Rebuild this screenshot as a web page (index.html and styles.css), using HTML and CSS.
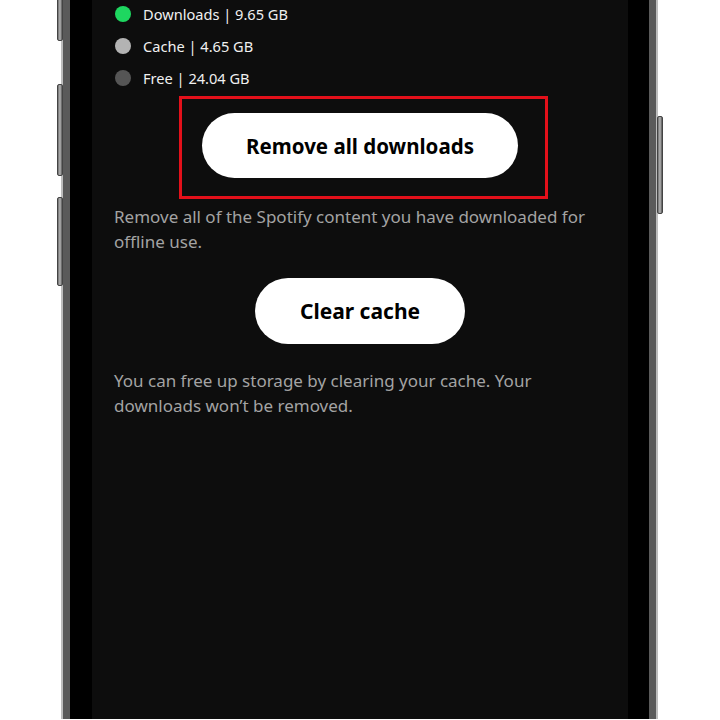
FILE: index.html
```html
<!DOCTYPE html>
<html>
<head>
	<meta charset="utf-8" />
	<title>Storage</title>
	<link rel="stylesheet" href="styles.css">
</head>
<body>
	<div class="phone">
		<span class="key key-a"></span>
		<span class="key key-b"></span>
		<span class="key key-c"></span>
		<span class="key key-power"></span>
		<div class="bezel">
			<div class="screen">
				<ul class="legend">
					<li><i class="dot dot-green"></i>Downloads | 9.65 GB</li>
					<li><i class="dot dot-light"></i>Cache | 4.65 GB</li>
					<li><i class="dot dot-dark"></i>Free | 24.04 GB</li>
				</ul>

				<div class="mark">
					<button class="pill pill-wide">Remove all downloads</button>
				</div>
				<p class="note">Remove all of the Spotify content you have downloaded for offline use.</p>

				<div class="center">
					<button class="pill pill-small">Clear cache</button>
				</div>
				<p class="note">You can free up storage by clearing your cache. Your downloads won’t be removed.</p>
			</div>
		</div>
	</div>
</body>
</html>
```

FILE: styles.css
```css
* { margin:0; padding:0; box-sizing:border-box; }
html, body { height:720px; overflow:hidden; background:#fff; }
body { font-family:"Noto Sans", "Lato", sans-serif; }

.phone { position:relative; width:597px; height:720px; margin-left:61px; border-left:2px solid #bdbdbd; border-right:2px solid #bdbdbd; background:#5a5a5a; padding:0 7px 0 7px; }
.bezel { height:100%; background:#000; padding:0 21px 0 22px; }
.screen { height:100%; background:#0d0d0d; padding:0 22px; color:#fff; }

.key { position:absolute; width:6px; border-radius:2px; background:linear-gradient(90deg,#6c6c6c,#b8b8b8 50%,#555); border:1px solid #444; }
.key-a { left:-6px; top:-30px; height:72px; }
.key-b { left:-6px; top:85px; height:92px; }
.key-c { left:-6px; top:198px; height:89px; }
.key-power { right:-7px; top:117px; height:98px; }

.legend { list-style:none; display:flex; flex-direction:column; gap:2px; margin-top:-1px; }
.legend li { height:30px; display:flex; align-items:center; font-size:14.6px; color:#f0f0f0; }
.dot { width:16px; height:16px; border-radius:50%; margin-right:12px; margin-left:1px; }
.dot-green { background:#1ed760; }
.dot-light { background:#b3b3b3; }
.dot-dark { background:#555; }

.mark { width:369px; height:103px; margin:3px 0 0 65px; border:3px solid #e3101a; padding:14px 27px 0 20px; }
.pill { border:none; border-radius:40px; background:#fff; color:#000; font-family:inherit; font-weight:700; font-size:20.5px; }
.pill-wide { width:316px; height:65px; }
.pill-small { width:210px; height:66px; font-size:21px; }

.center { display:flex; justify-content:center; margin-top:24px; }
.note { font-size:17px; line-height:25px; color:#a3a3a3; margin-top:5px; }
.center + .note { margin-top:24px; }
```
